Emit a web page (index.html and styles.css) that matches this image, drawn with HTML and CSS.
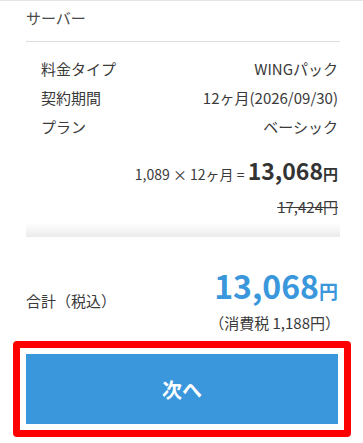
FILE: index.html
```html
<!DOCTYPE html>
<html lang="ja">
<head>
<meta charset="utf-8">
<link rel="stylesheet" href="styles.css">
</head>
<body>
<div class="card">
  <div class="title">サーバー</div>
  <div class="rows">
    <div class="row"><span>料金タイプ</span><span>WINGパック</span></div>
    <div class="row"><span>契約期間</span><span>12ヶ月(2026/09/30)</span></div>
    <div class="row"><span>プラン</span><span>ベーシック</span></div>
  </div>
  <div class="calc">1,089 × 12ヶ月 = <span class="calc-num">13,068</span><span class="calc-yen">円</span></div>
  <div class="strike"><s>17,424円</s></div>
  <div class="band"></div>
  <div class="total">
    <span class="total-label">合計（税込）</span>
    <span class="total-price"><span class="total-num">13,068</span><span class="total-yen">円</span></span>
  </div>
  <div class="tax">（消費税 1,188円）</div>
</div>
<div class="highlight">
  <button class="next">次へ</button>
</div>
</body>
</html>
```
FILE: styles.css
```css
html, body {
  margin: 0;
  padding: 0;
  background: #fff;
}
body {
  font-family: "Noto Sans CJK JP", "Noto Sans", sans-serif;
  color: #3a3a3a;
  font-size: 15px;
  width: 363px;
  height: 443px;
  overflow: hidden;
  border-top: 1px solid #e4e4e4;
  box-sizing: border-box;
}
.card {
  padding: 0 23px 0 26px;
}
.title {
  line-height: 34px;
  height: 34px;
  padding-bottom: 6px;
  border-bottom: 1px solid #dcdcdc;
  color: #4a4a4a;
}
.rows {
  padding: 12px 2px 0 15px;
}
.row {
  display: flex;
  justify-content: space-between;
  line-height: 29px;
  height: 29px;
}
.calc {
  margin-top: 14px;
  text-align: right;
  padding-right: 2px;
  line-height: 30px;
  height: 30px;
  font-size: 14px;
}
.calc-num {
  font-size: 23px;
  font-weight: 700;
  color: #333;
}
.calc-yen {
  font-size: 15px;
  font-weight: 700;
  color: #333;
}
.strike {
  margin-top: 12px;
  text-align: right;
  padding-right: 2px;
  line-height: 20px;
  height: 20px;
}
.band {
  margin-top: 6px;
  height: 14px;
  background: linear-gradient(to bottom, #ffffff, #ebebeb);
}
.total {
  margin-top: 28px;
  display: flex;
  justify-content: space-between;
  align-items: flex-end;
  padding-right: 2px;
}
.total-label {
  line-height: 20px;
  margin-bottom: 2px;
}
.total-price {
  color: #3a97dc;
  font-weight: 700;
  line-height: 40px;
}
.total-num {
  font-size: 32px;
}
.total-yen {
  font-size: 19px;
}
.tax {
  text-align: right;
  line-height: 20px;
  margin-top: 0;
}
.highlight {
  margin: 8px 12px 0 13px;
  border: 7px solid #ff0000;
  border-radius: 4px;
  padding: 6px;
}
.next {
  display: block;
  width: 100%;
  height: 70px;
  border: 0;
  background: #3a97dc;
  color: #fff;
  font-family: "Noto Sans CJK JP", "Noto Sans", sans-serif;
  font-size: 20px;
  font-weight: 700;
  padding: 0;
}
```
